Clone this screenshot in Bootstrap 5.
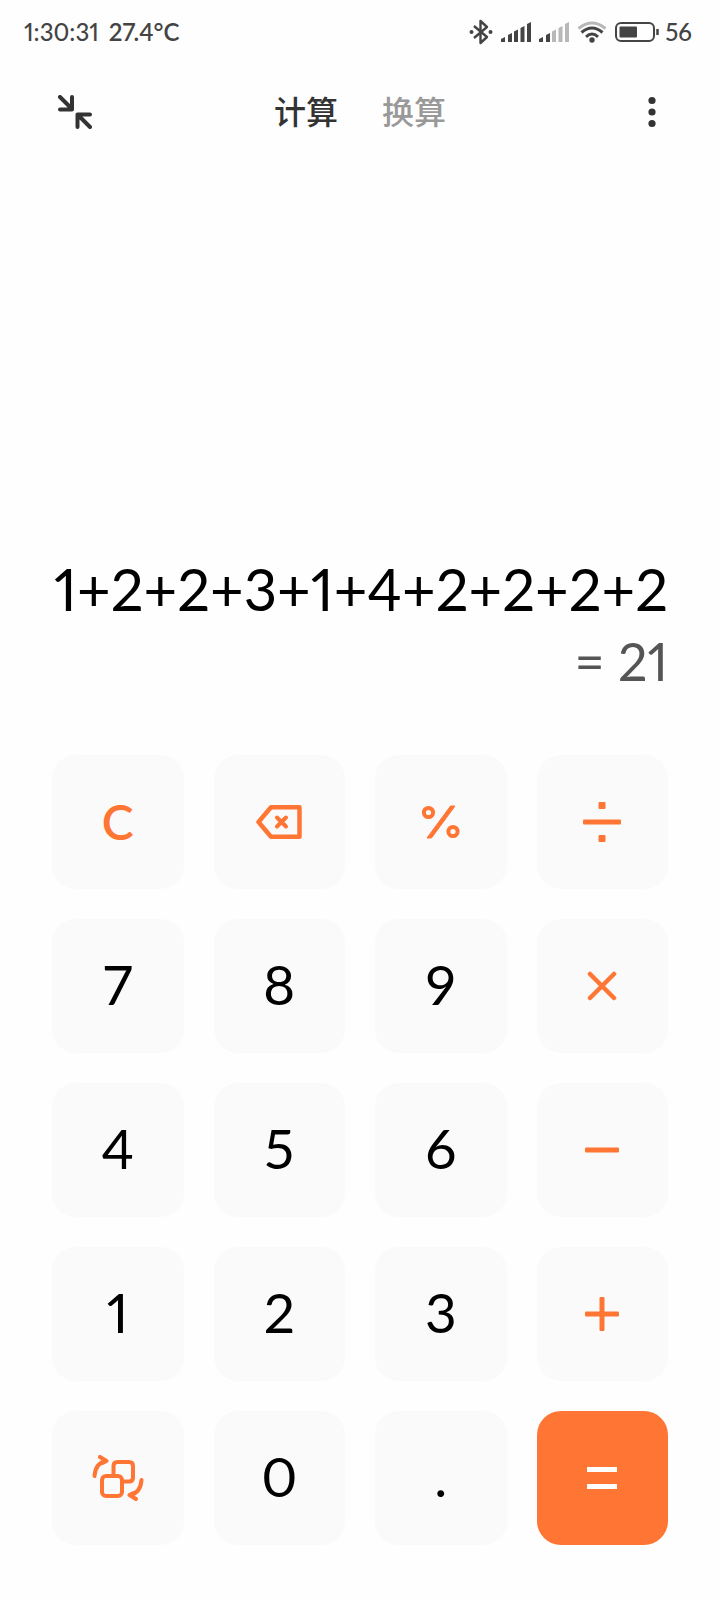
<!DOCTYPE html>
<html lang="zh-CN">
<head>
<meta charset="utf-8">
<meta name="viewport" content="width=device-width, initial-scale=1">
<title>计算器</title>
<link href="https://cdn.jsdelivr.net/npm/bootstrap@5.3.0/dist/css/bootstrap.min.css" rel="stylesheet">
<style>
  :root { --accent: #ff7634; --ink: #333; --key: #fafafa; }
  body { font-family: Lato, "Noto Sans CJK SC", sans-serif; font-variant-numeric: proportional-nums; background: #fefefe; color: #000; }
  svg { display: block; flex: none; }
  .status { padding: 0 28px 0 24px; height: 64px; color: #444; font-size: 24px; line-height: 32px; font-weight: 500; }
  .clock { gap: 10px; }
  .status-icons { gap: 8px; }
  .battery { gap: 6px; }
  .temp { font-weight: 600; }
  .topbar { padding: 0 52px; height: 96px; }
  .tool { color: var(--ink); }
  .tabs { gap: 44px; }
  .tab-link { font-size: 32px; line-height: 48px; font-weight: 500; color: #999; text-decoration: none; }
  .tab-link.active { color: var(--ink); }
  .readout { padding: 0 52px 60px; }
  .expr { font-size: 58px; line-height: 76px; white-space: nowrap; }
  .result { font-size: 52px; line-height: 68px; color: #555; }
  .keypad { display: grid; grid-template-columns: repeat(4, 1fr); grid-auto-rows: 134px; gap: 30px; padding: 0 52px 55px; }
  .key { display: flex; align-items: center; justify-content: center; border: 0; border-radius: 24px; background: var(--key); padding: 0 0 4px; font-size: 55px; line-height: 64px; font-variant-numeric: inherit; color: #000; }
  .key-op { color: var(--accent); padding: 0; }
  .key-clear { font-size: 48px; font-weight: 600; }
  .key-equals { background: var(--accent); color: #fff; padding: 0; }
</style>
</head>
<body>
<div class="d-flex flex-column min-vh-100">
  <header class="status d-flex align-items-center justify-content-between">
    <div class="clock d-flex"><span>1:30:31</span><span class="temp">27.4°C</span></div>
    <div class="status-icons d-flex align-items-center">
      <svg width="24" height="26" viewBox="0 0 24 26" fill="none" stroke="currentColor" stroke-width="2.4" stroke-linejoin="round" aria-label="蓝牙"><path d="M5 7l13 11-6.500 6V2l6.500 6L5 19"/><circle cx="2.500" cy="13" r="2" fill="currentColor" stroke="none"/><circle cx="21.500" cy="13" r="2" fill="currentColor" stroke="none"/></svg>
      <svg width="30" height="20" viewBox="0 0 30 20" fill="currentColor" aria-label="信号"><path d="M0 20v-3l4-2v5zM7 20v-7l4-2v9zM13 20V9.500l4-2V20zM19.500 20V6l4-2v16zM26 20V2l4-2v20z"/></svg>
      <svg width="30" height="20" viewBox="0 0 30 20" fill="currentColor" aria-label="信号"><path d="M0 20v-3l4-2v5zM7 20v-7l4-2v9z"/><path fill="#b8b8b8" d="M13 20V9.500l4-2V20zM19.500 20V6l4-2v16zM26 20V2l4-2v20z"/></svg>
      <svg width="30" height="22" viewBox="0 0 30 22" fill="none" stroke="currentColor" stroke-width="3" aria-label="无线网络"><path d="M1.500 7.500q13.500-11 27 0" stroke="#b8b8b8"/><path d="M4.500 11.500q10.500-9 21 0M9 15.800q6-5.600 12 0"/><circle cx="15" cy="19" r="2.700" fill="currentColor" stroke="none"/></svg>
      <div class="battery d-flex align-items-center">
        <svg width="44" height="20" viewBox="0 0 44 20" fill="none" stroke="currentColor" stroke-width="2" aria-label="电池"><rect x="1" y="1" width="38" height="18" rx="5"/><rect x="4.500" y="4.500" width="17.500" height="11" rx="1" fill="currentColor" stroke="none"/><path d="M42.500 7v6" stroke-width="2.500"/></svg>
        <span>56</span>
      </div>
    </div>
  </header>

  <nav class="topbar d-flex align-items-center justify-content-between">
    <button class="tool btn p-0 border-0" type="button" aria-label="缩小">
      <svg width="44" height="34" viewBox="0 0 44 34" fill="none" stroke="currentColor" stroke-width="4" stroke-linecap="round" stroke-linejoin="round"><path d="M8 2l12 12M20 2v12.500H8M38 32L26 20M25.500 32V19.500H38"/></svg>
    </button>
    <div class="tabs d-flex">
      <a class="tab-link active" href="#calc" aria-current="page">计算</a>
      <a class="tab-link" href="#convert">换算</a>
    </div>
    <button class="tool btn p-0 border-0" type="button" aria-label="更多">
      <svg width="44" height="34" viewBox="0 0 44 34" fill="currentColor"><circle cx="28" cy="5.500" r="3.600"/><circle cx="28" cy="17" r="3.600"/><circle cx="28" cy="28.500" r="3.600"/></svg>
    </button>
  </nav>

  <main class="d-flex flex-column flex-grow-1" id="calc">
    <section class="readout flex-grow-1 d-flex flex-column justify-content-end text-end">
      <div class="expr">1+2+2+3+1+4+2+2+2+2</div>
      <output class="result">= 21</output>
    </section>

    <section class="keypad">
      <button class="key key-op key-clear" type="button">C</button>
      <button class="key key-op" type="button" aria-label="退格"><svg width="46" height="34" viewBox="0 0 46 34" fill="none" stroke="currentColor" stroke-width="4.500" stroke-linejoin="round" stroke-linecap="round"><path d="M15 2.300h28.500v29.400H15L2.500 17z"/><path stroke-width="4" d="M21 12.500l9 9M30 12.500l-9 9"/></svg></button>
      <button class="key key-op" type="button" aria-label="%"><svg width="38" height="34" viewBox="0 0 38 34" fill="none" stroke="currentColor" stroke-width="4"><circle cx="6.500" cy="7.500" r="4.600"/><circle cx="31" cy="26.500" r="4.600"/><path d="M5 33h4.500L33 1h-4.500z" fill="currentColor" stroke-width="1"/></svg></button>
      <button class="key key-op" type="button" aria-label="÷"><svg width="38" height="40" viewBox="0 0 38 40" fill="currentColor"><rect y="17.500" width="38" height="5" rx="1"/><rect x="15.500" width="7" height="7" rx="1"/><rect x="15.500" y="33" width="7" height="7" rx="1"/></svg></button>

      <button class="key" type="button">7</button>
      <button class="key" type="button">8</button>
      <button class="key" type="button">9</button>
      <button class="key key-op" type="button" aria-label="×"><svg width="30" height="30" viewBox="0 0 30 30" fill="none" stroke="currentColor" stroke-width="4.500" stroke-linecap="round"><path d="M3 3l24 24M27 3L3 27"/></svg></button>

      <button class="key" type="button">4</button>
      <button class="key" type="button">5</button>
      <button class="key" type="button">6</button>
      <button class="key key-op" type="button" aria-label="−"><svg width="34" height="34" viewBox="0 0 34 34" fill="currentColor"><rect y="14.500" width="34" height="5" rx="1"/></svg></button>

      <button class="key" type="button">1</button>
      <button class="key" type="button">2</button>
      <button class="key" type="button">3</button>
      <button class="key key-op" type="button" aria-label="+"><svg width="34" height="34" viewBox="0 0 34 34" fill="currentColor"><rect y="14.500" width="34" height="5" rx="1"/><rect x="14.500" width="5" height="34" rx="1"/></svg></button>

      <button class="key key-op" type="button" aria-label="切换科学计算"><svg width="52" height="46" viewBox="0 0 52 46" fill="none" stroke="currentColor" stroke-width="4" stroke-linejoin="round" stroke-linecap="round"><path d="M21.500 19V11q0-4 4-4H37q4 0 4 4v11.500q0 4-4 4h-6"/><rect x="10" y="21" width="20" height="20" rx="4"/><path d="M2.500 21Q3.500 8 14 6M8 2l6.500 4-4 2M49.500 25Q48.500 38 38 40M44 44l-6.500-4 4-2"/></svg></button>
      <button class="key" type="button">0</button>
      <button class="key" type="button">.</button>
      <button class="key key-equals" type="button" aria-label="="><svg width="30" height="22" viewBox="0 0 30 22" fill="currentColor"><rect width="30" height="5"/><rect y="17" width="30" height="5"/></svg></button>
    </section>
  </main>
</div>
<script src="https://cdn.jsdelivr.net/npm/bootstrap@5.3.0/dist/js/bootstrap.bundle.min.js"></script>
</body>
</html>
